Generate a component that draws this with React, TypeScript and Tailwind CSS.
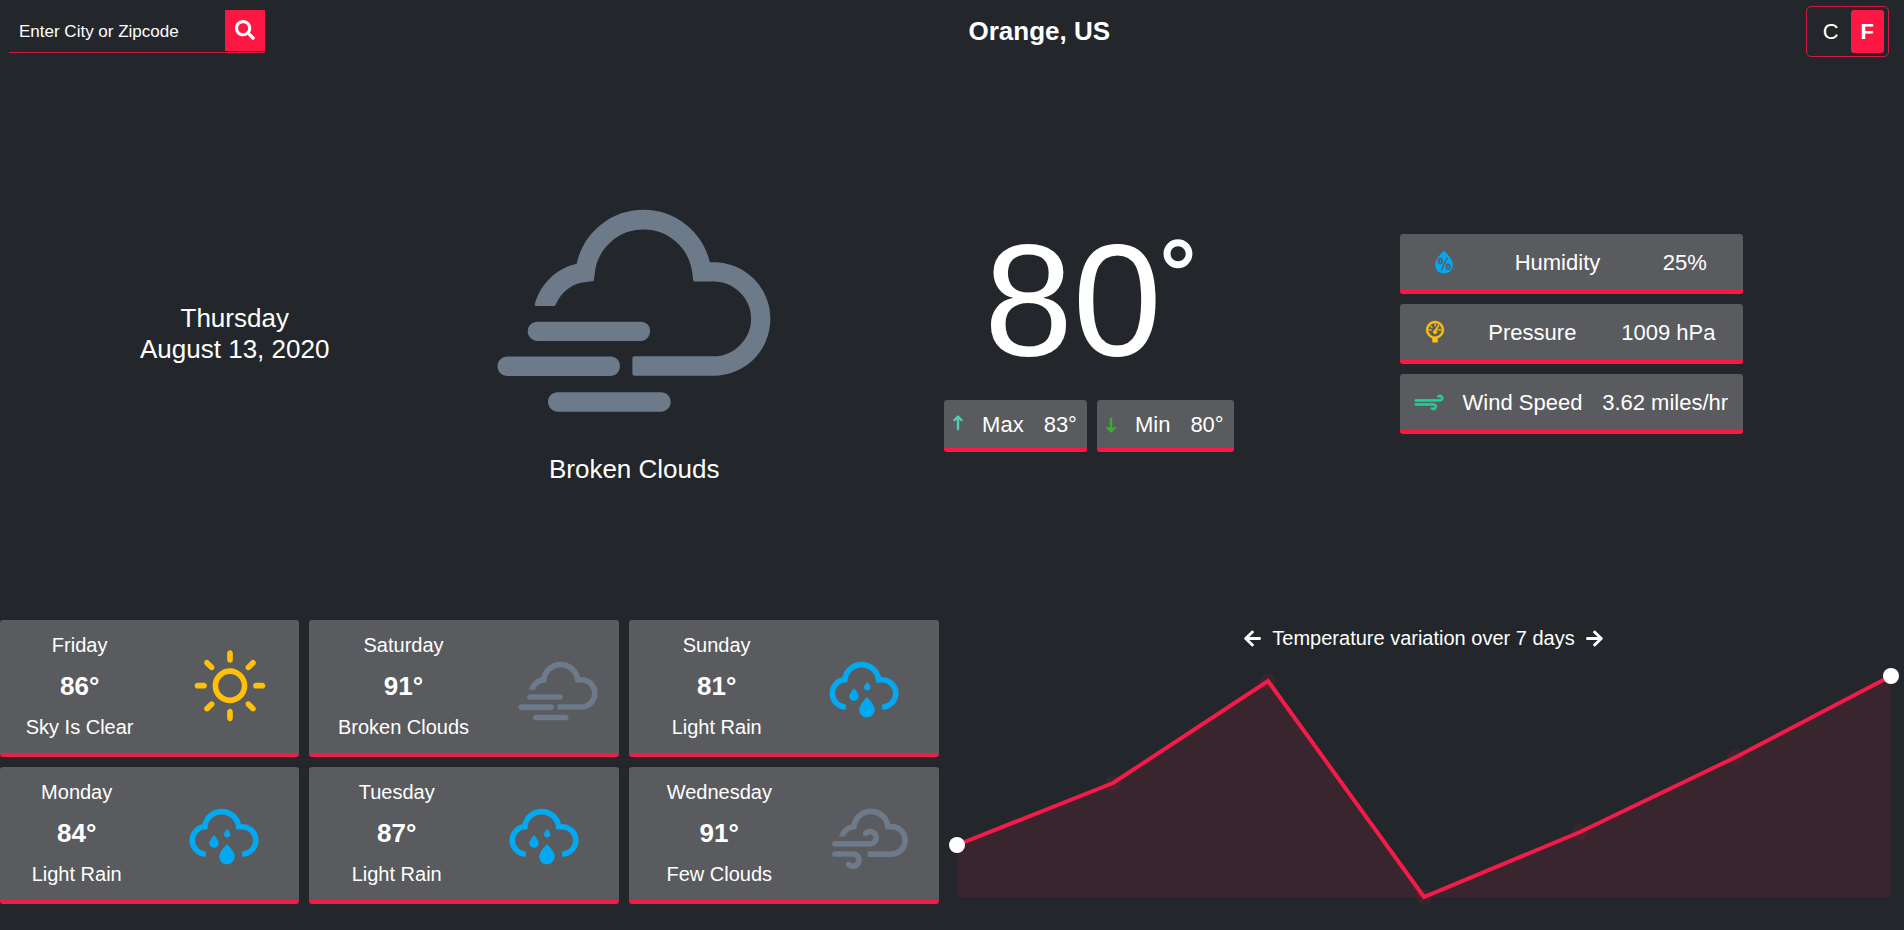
import { useState, type ReactNode } from "react";
import { FaArrowLeft, FaArrowRight, FaSearch } from "react-icons/fa";
import {
  WiBarometer,
  WiCloudyGusts,
  WiCloudyWindy,
  WiDaySunny,
  WiDegrees,
  WiDirectionUp,
  WiHumidity,
  WiSprinkle,
  WiStrongWind,
} from "react-icons/wi";

type Condition = "clear" | "broken" | "rain" | "few";

const conditionIcons: Record<Condition, ReactNode> = {
  clear: <WiDaySunny className="size-[100px] shrink-0 text-[#ffc107]" />,
  broken: <WiCloudyWindy className="size-[100px] shrink-0 text-[#6c7a89]" />,
  rain: <WiSprinkle className="size-[100px] shrink-0 text-[#02a9f0]" />,
  few: <WiCloudyGusts className="size-[100px] shrink-0 text-[#6c7a89]" />,
};

const forecast: { day: string; temp: number; label: string; condition: Condition }[] = [
  { day: "Friday", temp: 86, label: "Sky Is Clear", condition: "clear" },
  { day: "Saturday", temp: 91, label: "Broken Clouds", condition: "broken" },
  { day: "Sunday", temp: 81, label: "Light Rain", condition: "rain" },
  { day: "Monday", temp: 84, label: "Light Rain", condition: "rain" },
  { day: "Tuesday", temp: 87, label: "Light Rain", condition: "rain" },
  { day: "Wednesday", temp: 91, label: "Few Clouds", condition: "few" },
];

const points = [
  [18, 177],
  [174, 115],
  [329, 13],
  [485, 229],
  [641, 164],
  [797, 89],
  [952, 8],
];

const activeUnit = "h-[43px] rounded-[3px] bg-[#ff1744] px-2.5 font-bold";
const idleUnit = "h-[43px] rounded-[3px] px-3";

function Header() {
  const [unit, setUnit] = useState<"C" | "F">("F");
  return (
    <header className="flex h-[58px] items-center justify-between pt-1 pr-[15px] pl-[9px]">
      <form className="flex w-64 border-b border-[#ff1744]/80 pb-px" onSubmit={(e) => e.preventDefault()}>
        <input
          aria-label="Enter City or Zipcode"
          placeholder="Enter City or Zipcode"
          className="h-[41px] min-w-0 flex-1 bg-transparent pt-[3px] pl-2.5 text-[17px] text-white outline-none placeholder:text-white placeholder:opacity-100"
        />
        <button
          type="submit"
          aria-label="Search"
          className="flex h-[41px] w-10 items-center justify-center bg-[#ff1744] text-xl"
        >
          <FaSearch />
        </button>
      </form>
      <h1 className="pl-2 text-[26px] leading-8 font-bold">Orange, US</h1>
      <div className="flex rounded-[5px] border border-[#ff1744]/80 px-1 py-[3px] text-[22px]">
        <button type="button" onClick={() => setUnit("C")} className={unit === "C" ? activeUnit : idleUnit}>
          C
        </button>
        <button type="button" onClick={() => setUnit("F")} className={unit === "F" ? activeUnit : idleUnit}>
          F
        </button>
      </div>
    </header>
  );
}

function Extreme({ icon, label, value }: { icon: ReactNode; label: string; value: string }) {
  return (
    <div className="flex h-[52px] items-center gap-5 rounded-[3px] border-b-4 border-[#ff1744] bg-[#5a5b5e] px-2.5 text-[22px]">
      <span className="flex w-2 justify-center">{icon}</span>
      <span>{label}</span>
      <span>{value}</span>
    </div>
  );
}

function Detail({ icon, label, value }: { icon: ReactNode; label: string; value: string }) {
  return (
    <div className="flex h-[60px] w-[343px] items-center justify-around rounded-[3px] border-b-4 border-[#ff1744] bg-[#5a5b5e] px-[5px] text-[22px]">
      {icon}
      <dt>{label}</dt>
      <dd>{value}</dd>
    </div>
  );
}

function Current() {
  return (
    <main className="flex flex-1 items-center justify-between pr-[156px] pl-[140px]">
      <div className="text-center text-[26px] leading-[31px]">
        <p>Thursday</p>
        <p>August 13, 2020</p>
      </div>
      <div className="flex w-[297px] flex-col items-center">
        <div className="mb-11 flex h-[225px] items-center justify-center">
          <WiCloudyWindy className="size-[344px] shrink-0 text-[#6c7a89]" />
        </div>
        <p className="text-[26px] leading-[30px]">Broken Clouds</p>
      </div>
      <div className="flex flex-col items-center">
        <div className="flex h-[184px] text-[160px] leading-[168px]">
          80
          <span className="flex w-8 justify-center">
            <WiDegrees className="-mt-9 size-[240px] shrink-0" />
          </span>
        </div>
        <div className="flex gap-2.5 px-[5px]">
          <Extreme
            icon={<WiDirectionUp className="size-7 shrink-0 text-[#4dd0b5]" />}
            label="Max"
            value="83°"
          />
          <Extreme
            icon={<WiDirectionUp className="size-7 shrink-0 rotate-180 text-[#3dae2b]" />}
            label="Min"
            value="80°"
          />
        </div>
      </div>
      <dl className="flex flex-col gap-2.5 px-[5px]">
        <Detail
          icon={
            <span className="flex w-4 justify-center">
              <WiHumidity className="size-9 shrink-0 text-[#02a9f0]" />
            </span>
          }
          label="Humidity"
          value="25%"
        />
        <Detail
          icon={
            <span className="flex w-4 justify-center">
              <WiBarometer className="size-9 shrink-0 stroke-current stroke-[0.4] text-[#ffc107]" />
            </span>
          }
          label="Pressure"
          value="1009 hPa"
        />
        <Detail
          icon={
            <span className="flex w-7 justify-center">
              <WiStrongWind className="size-9 shrink-0 stroke-current stroke-[0.4] text-[#1fd19a]" />
            </span>
          }
          label="Wind Speed"
          value="3.62 miles/hr"
        />
      </dl>
    </main>
  );
}

function Forecast() {
  return (
    <ul className="grid grid-cols-[299fr_310fr_310fr] gap-2.5">
      {forecast.map((item) => (
        <li
          key={item.day}
          className="flex justify-end overflow-hidden rounded-[3px] border-b-4 border-[#ec1d48] bg-[#5a5b5e]"
        >
          <div className="flex w-[310px] shrink-0 items-center justify-evenly">
            <div className="mr-7 py-[5px] text-center text-xl leading-[41px]">
              <p>{item.day}</p>
              <p className="text-[26px] leading-[41px] font-bold">{item.temp}°</p>
              <p>{item.label}</p>
            </div>
            <div className="flex h-[100px] w-16 justify-center">{conditionIcons[item.condition]}</div>
          </div>
        </li>
      ))}
    </ul>
  );
}

function Chart() {
  const line = points.map(([x, y]) => `${x},${y}`).join(" ");
  return (
    <figure>
      <figcaption className="flex h-9 items-center justify-center gap-2.5 pl-1 text-xl">
        <FaArrowLeft className="size-[19px]" />
        Temperature variation over 7 days
        <FaArrowRight className="size-[19px]" />
      </figcaption>
      <svg viewBox="0 0 965 240" className="mt-3 w-full overflow-visible" role="img" aria-label="Temperature variation">
        <polygon points={`18,229 ${line} 952,229`} fill="#ff1744" fillOpacity="0.1" />
        {points.map(([x, y]) => (
          <circle key={x} cx={x} cy={y} r="8" fill="#ff1744" fillOpacity="0.1" />
        ))}
        <polyline points={line} fill="none" stroke="#f51b49" strokeWidth="4" />
        <circle cx={points[0][0]} cy={points[0][1]} r="8" fill="#fff" />
        <circle cx={points[6][0]} cy={points[6][1]} r="8" fill="#fff" />
      </svg>
    </figure>
  );
}

export default function App() {
  return (
    <div className="flex min-h-screen flex-col bg-[#23272b] font-['Liberation_Sans',Arial,sans-serif] text-white">
      <Header />
      <Current />
      <section className="grid grid-cols-[939fr_965fr] items-start pt-2.5 pb-[22px]">
        <Forecast />
        <Chart />
      </section>
    </div>
  );
}
